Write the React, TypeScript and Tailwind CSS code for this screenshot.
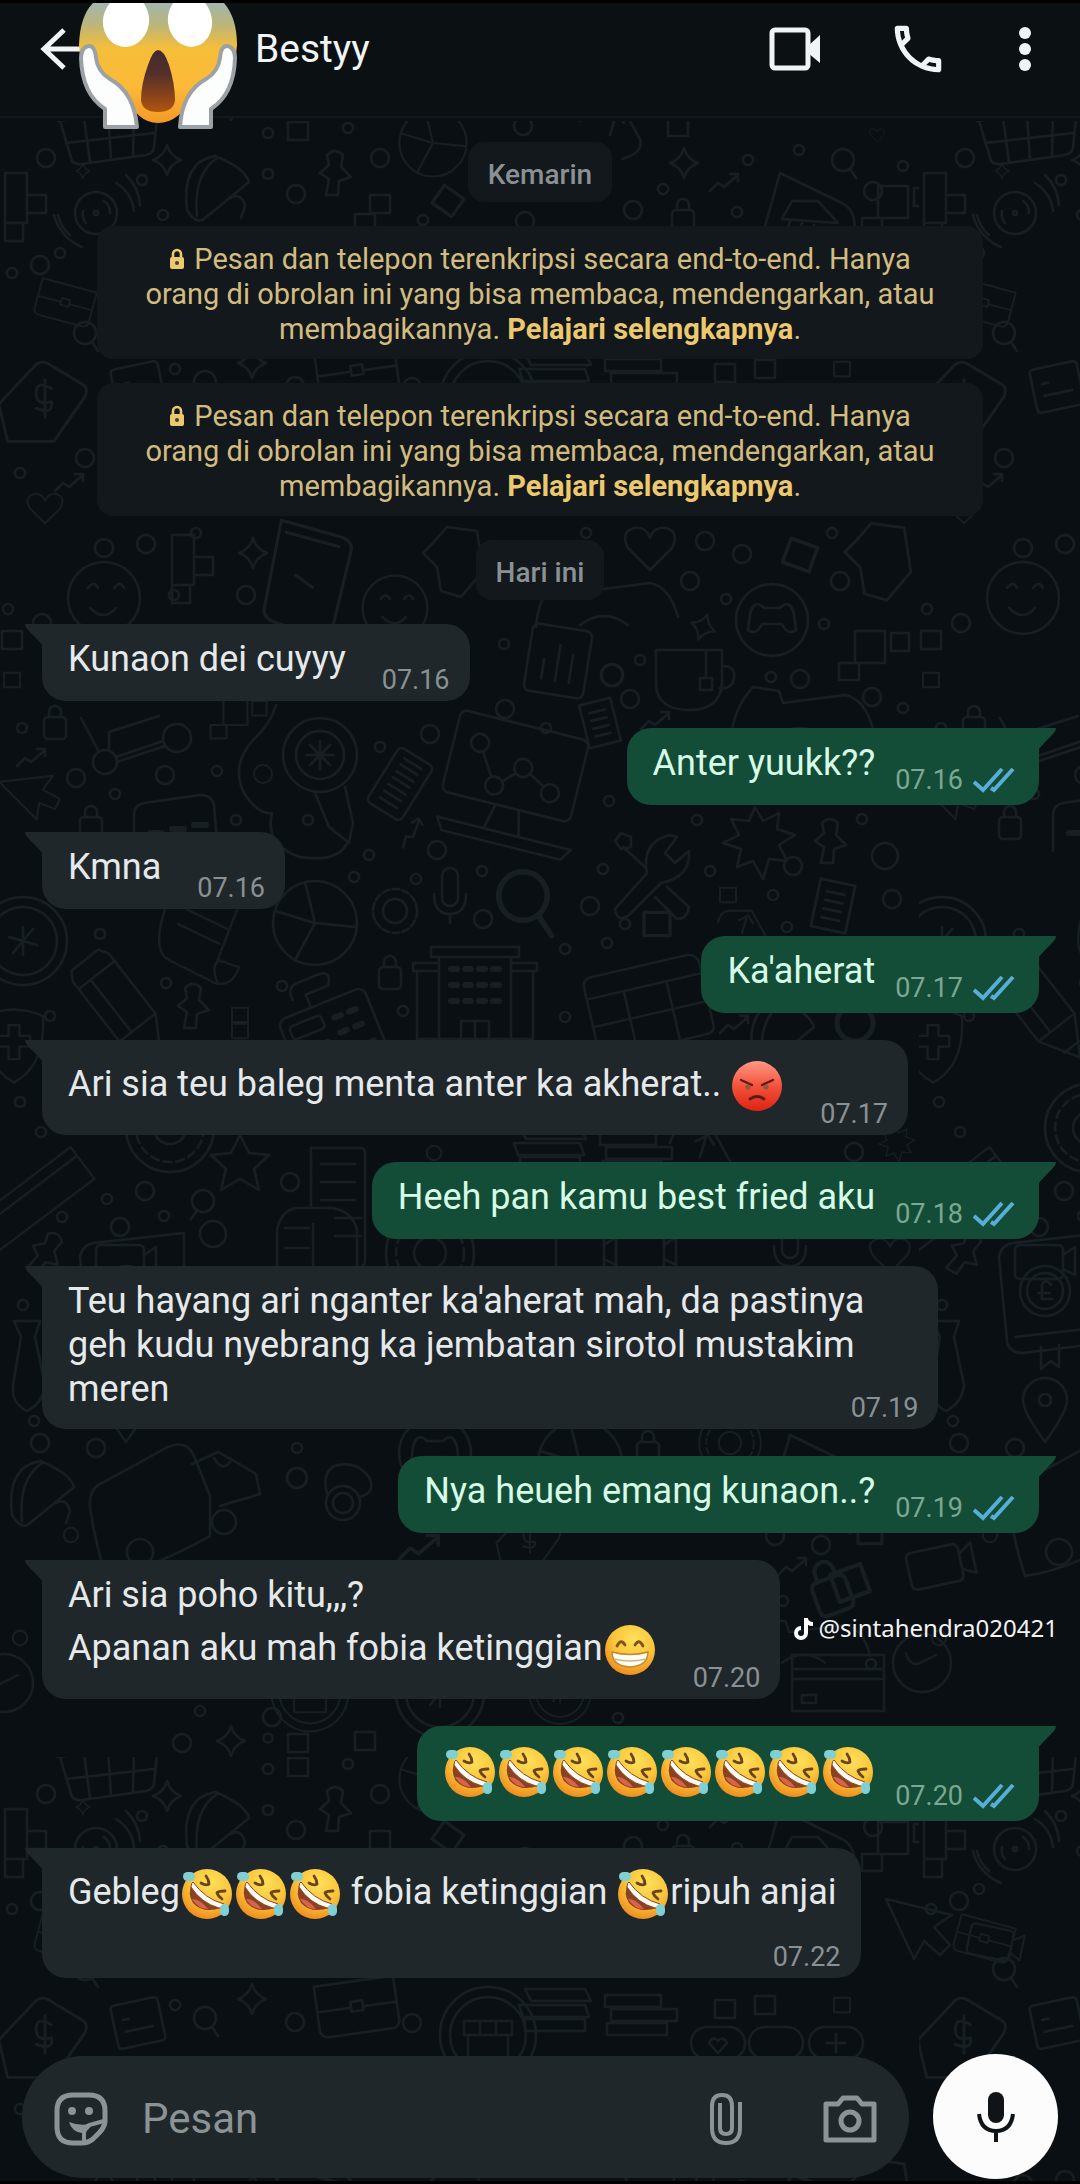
import React from "react";
import { MdOutlineCall } from "react-icons/md";

/* ---------- Wallpaper ---------- */

type Doodle = [kind: string, x: number, y: number, scale?: number, rotate?: number];

const shapes: Record<string, React.ReactNode> = {
  dot: <circle r="5" />,
  ring: <circle r="9" />,
  disc: <circle r="13" />,
  square: <rect x="-10" y="-9" width="20" height="18" />,
  squares: <path d="M-2 -32h30v32h-30zM-18 0h20v17h-20zM34 -30h18v18h-18z" />,
  steps: <path d="M-22 -30h22v50h-22zM0 -8h19v18h-19zM-22 20h18v18h-18z" />,
  spark: <path d="M0 -15Q3 -4 14 0Q3 4 0 15Q-3 4 -14 0Q-3 -4 0 -15z" />,
  zig: <path d="M-15 8l8 -8l6 4l14 -12M5 -9h8v7" />,
  lock: (
    <>
      <rect x="-11" y="-6" width="22" height="22" rx="4" />
      <path d="M-6 -6v-5a6 6 0 0 1 12 0v5" />
    </>
  ),
  pin: <path d="M-8 -20q8 -8 16 0l-2 12l10 10l-12 4l-1 14h-12l3 -16l-9 -6l9 -8z" />,
  pie: (
    <>
      <circle r="42" />
      <path d="M0 0L-10 -41M0 0L41 4M0 0L-20 37M0 0L-40 -12" />
    </>
  ),
  sonar: (
    <>
      <circle r="21" />
      <circle r="2" />
      <path d="M-10 10a14 14 0 0 1 -3 -12M8 -12a14 14 0 0 1 6 12M20 -30a38 38 0 0 1 18 28M30 -38a46 46 0 0 1 14 30M-26 22a36 36 0 0 1 -12 -20M-14 34a46 46 0 0 1 -28 -32" />
    </>
  ),
  taco: <path d="M-28 22Q-34 -26 0 -32Q30 -20 34 -6L-10 30Q-18 38 -28 22zM-18 28Q-22 -14 2 -30M12 12q14 -10 18 6l-4 12" />,
  basket: (
    <>
      <path d="M-52 -18L52 -30q5 8 -2 12L-50 -6q-6 -4 -2 -12zM-48 -6l12 40q4 4 10 3l64 -9q8 -2 8 -8l4 -38" />
      <path d="M-24 -9l6 44M0 -12l3 44M26 -15l-1 44M-42 16l88 -10M-26 -14L-6 -38L28 -22" />
    </>
  ),
  magnifier: (
    <>
      <circle r="11" />
      <path d="M7 9l6 9" />
    </>
  ),
  lens: (
    <>
      <circle r="37" />
      <circle r="24" />
      <path d="M-14 0h28M0 -14v28M-10 -10l20 20M10 -10l-20 20" />
      <path d="M-5 38l14 34l20 16l4 -20l-8 -36M-44 -50Q-50 -30 -66 -16Q-90 10 -76 38Q-62 60 -48 58Q-56 90 -20 102Q20 108 28 86" />
    </>
  ),
  barcode: (
    <>
      <rect x="-20" y="-32" width="40" height="64" rx="5" />
      <path d="M-10 -24h20M-10 -17h20M-10 -9h20M-10 -2h20M-10 6h20M-10 14h20M-10 22h20" />
    </>
  ),
  laptop: (
    <>
      <rect x="-66" y="-44" width="132" height="84" rx="7" />
      <path d="M-64 66L74 66L66 78H-56zM-10 40l-6 26M14 40l6 26" />
      <circle cx="-40" cy="-16" r="9" />
      <circle cx="-16" cy="22" r="9" />
      <circle cx="8" cy="-2" r="9" />
      <circle cx="40" cy="16" r="9" />
      <path d="M-35 -8l14 22M-9 16l11 -11M16 2l16 9" />
    </>
  ),
  gear: (
    <>
      <circle r="12" />
      <circle r="22" strokeDasharray="7 3" />
    </>
  ),
  mic: <path d="M-8 -20a8 8 0 0 1 16 0v22a8 8 0 0 1 -16 0zM-16 -2q0 20 16 20q16 0 16 -20M0 18v9" />,
  coin: (
    <>
      <circle r="44" />
      <circle r="34" />
      <path d="M0 -14v28M-14 -4l28 8M-10 12L10 -12" />
    </>
  ),
  scroll: <path d="M-40 -40q-22 60 0 70l52 26q18 4 26 -18l-24 -8l24 -62M14 56q-8 -20 2 -26M-30 -10l46 22M-20 -26l46 22" />,
  pencil: <path d="M-18 -60h36l6 10v80l-24 40l-24 -40v-80zM-24 -40h48M-24 30h48M-8 -40v70M-10 56h20" />,
  building: (
    <>
      <path d="M-44 -44h88v10h-88zM-36 -34v82h72v-82M-62 -28h26v8h-26zM36 -28h26v8h-26zM-58 -20v68h22M58 -20v68h-22M-14 48v-18h28v18M0 30v18" />
      <path d="M-24 -22h48M-24 -6h48M-24 10h48" strokeDasharray="6 8" strokeWidth="6" />
    </>
  ),
  calc: (
    <>
      <rect x="-46" y="-26" width="92" height="80" rx="8" />
      <rect x="-38" y="-16" width="34" height="14" rx="4" />
      <path d="M8 -8h30M8 8h30M-30 12h30M-30 28h66" strokeDasharray="7 9" strokeWidth="6" />
      <path d="M-10 -26v-14h24q10 -14 -6 -14h-20q-14 0 -12 14" />
    </>
  ),
  chart: (
    <>
      <rect x="-30" y="-34" width="60" height="68" rx="6" />
      <path d="M-14 20v-20M0 20v-36M14 20v-28" />
    </>
  ),
  pocket: <path d="M-34 -28h66v36q-4 24 -32 24q-32 0 -34 -24zM16 -28v26M32 -12q14 0 12 12t-14 10M10 0h12v12h-12z" />,
  pad: (
    <>
      <circle r="36" />
      <path d="M-22 -6q4 -16 14 -6h16q10 -10 14 6l2 16q-8 6 -14 -6h-20q-6 12 -14 6z" />
    </>
  ),
  heart: <path d="M0 22L-22 0q-8 -16 6 -20q12 -2 16 10q4 -12 16 -10q14 4 6 20z" />,
  doc: <path d="M-16 -22h32v44h-32zM-8 -12h16M-8 -4h16M-8 4h16M-8 12h16" />,
  folder: <path d="M-64 24q2 -30 22 -52l26 4l4 12l62 -8q20 4 28 34M-20 22q24 -18 48 0" />,
  wrench: (
    <path d="M-40 38L-8 2Q-14 -28 14 -36L22 -34L10 -18L20 -8L34 -20Q36 6 6 12L-26 44Q-38 52 -40 38zM-10 -4L-32 -24M-34 -38l10 4v10l-10 2l-6 -8zM12 16l22 20q-2 12 -12 12l-22 -22" />
  ),
  burst: <path d="M0 -34l8 14l16 -8l-2 16l18 6l-16 10l8 16l-18 -2l-6 20l-10 -18l-16 6l4 -18l-18 -6l16 -8l-8 -16l18 2z" />,
  cloud: <path d="M-34 4q-2 -26 22 -24q24 -14 38 4q8 14 8 38q-6 16 -24 8q-40 -4 -44 -26zM14 -6a11 11 0 1 0 2 16" />,
  calendar: <path d="M-52 -40h104q10 2 10 12v66q0 8 -10 8h-104q-10 0 -10 -10v-66q0 -10 10 -10zM-62 -18h124M-62 12h124M-22 -18v64M24 -18v64" />,
  shield: <path d="M-32 -30Q0 -44 32 -30Q36 24 0 44Q-36 24 -32 -30zM-6 -20h12v12h12v12h-12v14h-12v-14h-12v-12h12z" />,
  ruler: <path d="M-80 -18h150v44h-150zM-80 -6h150" />,
  wheel: (
    <>
      <circle r="44" />
      <circle r="34" strokeDasharray="8 5" />
      <circle r="16" />
    </>
  ),
  star: <path d="M0 -28l9 18l20 2l-15 14l5 21l-19 -11l-19 11l5 -21l-15 -14l20 -2z" />,
  sheet: <path d="M-26 -60h50q4 0 4 6v106q0 8 -8 8M-26 -60v60M-16 -44h34M-16 -26h34M-16 -8h34M-2 10h26M-2 28h26M-60 60v-38q4 -20 20 -22h36q20 4 24 22v38M-24 60v-44M-52 20h24M-52 40h24" />,
  tie: <path d="M-13 -42h26l-5 16l10 48q-2 18 -18 26q-16 -8 -14 -26l8 -48z" />,
  book: (
    <>
      <path d="M-46 -46q2 -12 14 -14l90 -10v110l-80 10q-14 0 -16 -12zM-30 34l88 -10M-4 44v22l10 -8l8 6v-22" />
      <circle cx="0" cy="-12" r="25" />
      <circle cx="0" cy="-12" r="18" />
      <path d="M6 -18q-6 -8 -9 0v14h10M-7 -10h12" />
    </>
  ),
  marker: (
    <>
      <path d="M0 34Q-22 4 -22 -8A22 22 0 0 1 22 -8Q22 4 0 34z" />
      <circle cy="-8" r="6" />
    </>
  ),
  skate: (
    <>
      <path d="M-60 20q-2 -20 14 -26l62 -34q20 -10 28 8l16 40v40q-60 34 -104 40q-10 -30 -16 -68zM42 -24l26 -12l18 10l20 12l4 20l-40 12M64 -30q8 14 16 4" />
      <circle cx="74" cy="34" r="12" />
      <circle cx="-10" cy="64" r="13" />
    </>
  ),
  bino: (
    <>
      <circle r="17" />
      <circle r="10" />
      <path d="M-16 -10q-6 -22 10 -28q20 -4 32 12q8 16 -10 20" />
    </>
  ),
  camera: (
    <>
      <rect x="-24" y="-18" width="48" height="34" rx="5" />
      <path d="M24 -8l12 -8v28l-12 -6" />
    </>
  ),
  card: <path d="M-46 -28h92v56h-92zM-46 -14h92M-46 -4h92M-36 12h14v8h-14z" />,
  clock: (
    <>
      <circle r="29" />
      <path d="M-16 -10q4 14 14 10l16 -8" />
    </>
  ),
  tag: (
    <>
      <path d="M-34 34L-42 0L-8 -36q6 -4 12 0l30 18q6 4 2 12L8 34z" />
      <path d="M6 -14q-14 -8 -14 4t14 8q2 12 -14 6M0 -22v34" />
    </>
  ),
  note: <path d="M-24 -18q0 -4 4 -4h40q4 0 4 4v36q0 4 -4 4h-40q-4 0 -4 -4zM-14 -6h6M-14 6h28" />,
  brief: <path d="M-40 -26h80v46q-2 6 -8 6h-64q-6 0 -8 -6zM-40 0h34M6 0h34M-6 -6h12v10h-12z" />,
  shop: (
    <>
      <circle r="48" />
      <circle r="38" />
      <path d="M-24 -14h48v14h-48zM-20 2v22h40v-22M-8 -14v14M8 -14v14" />
    </>
  ),
  papers: <path d="M-60 -26h60l6 12h-60zM-66 -10h66l4 12h-66zM-60 4h60v12h-60zM20 -20h56v12h-56zM26 -6h66v12h-66zM22 8h60v12h-60z" />,
  pills: (
    <>
      <rect x="-84" y="-16" width="54" height="32" rx="16" />
      <rect x="-26" y="-16" width="54" height="32" rx="16" />
      <rect x="34" y="-16" width="54" height="32" rx="16" />
      <path d="M52 0h18M61 -9v18M-57 10l-9 -10q4 -8 9 -2q5 -6 9 2z" />
    </>
  ),
  cursor: <path d="M-34 -34L32 -18L14 -6L30 12L20 22L4 8L-6 26z" />,
  bank: (
    <>
      <path d="M-46 54L-20 -38L42 -8q18 10 10 36L40 60" />
      <path d="M-18 8l10 -18l26 0l20 22zM-10 10l-6 18M2 12l-6 20M14 14l-4 20M28 16l-4 18M-22 26l50 14" />
    </>
  ),
  bag: <path d="M-30 -20q4 -14 14 -14h28l18 32q4 14 -18 20M0 -6l6 -20M-4 -22l12 -6l6 10" />,
  phone: <path d="M-28 -44L22 -30q10 4 8 12l-16 66q-4 8 -12 6l-38 -14q-8 -4 -6 -12zM-24 -34l44 12M-16 2l14 10" />,
  mitten: <path d="M-22 -20l14 -16l30 4l6 40l-22 26l-20 -6l-4 -24l-14 -14z" />,
  face: (
    <>
      <circle r="36" />
      <path d="M-16 -10q6 -8 10 0M10 -10q6 -8 10 0M-14 10q14 14 26 0" />
    </>
  ),
  pass: (
    <>
      <path d="M-42 26v-36q0 -10 10 -12l56 -8q12 0 14 10l4 46" />
      <path d="M-26 8h12M-4 4h12M18 0h12" strokeWidth="6" />
    </>
  ),
  bones: (
    <>
      <circle cx="-36" cy="14" r="12" />
      <circle cx="36" cy="-10" r="14" />
      <path d="M-25 9L22 -7M-24 14L24 -2M-42 4L-60 -30M-32 2v-18l50 -16" />
    </>
  ),
};

const doodles: Doodle[] = [
  ["basket", 108, 124], ["ring", 46, 155], ["spark", 83, 168, 0.5], ["spark", 167, 157], ["dot", 142, 177],
  ["sonar", 96, 210], ["steps", 27, 200], ["taco", 215, 185], ["dot", 163, 212], ["dot", 268, 130],
  ["square", 298, 128], ["dot", 268, 171], ["ring", 296, 191], ["pin", 335, 172], ["ring", 380, 155],
  ["dot", 348, 125], ["pie", 433, 140, 0.8], ["square", 448, 198, 1.2, 35], ["square", 380, 201], ["square", 365, 220],
  ["ring", 523, 123], ["ring", 525, 218], ["dot", 423, 217], ["bag", 610, 138], ["square", 678, 124],
  ["spark", 684, 160], ["dot", 663, 186], ["ring", 633, 207], ["lock", 683, 213], ["zig", 725, 180],
  ["dot", 748, 157], ["dot", 799, 147], ["dot", 737, 209], ["bank", 800, 208], ["magnifier", 843, 157],
  ["ring", 873, 188], ["dot", 903, 163], ["heart", 877, 132, 0.3], ["squares", 880, 215],
  ["dot", 60, 250], ["ring", 40, 262], ["brief", 65, 300, 0.7, 15], ["dot", 12, 270], ["magnifier", 85, 330],
  ["tag", 45, 401, 1.1], ["note", 138, 384, 1, -12], ["magnifier", 205, 379], ["dot", 175, 366], ["ring", 295, 383],
  ["spark", 252, 360], ["brief", 357, 368, 1, -8], ["ring", 412, 384], ["shop", 488, 396], ["papers", 585, 376],
  ["pills", 775, 404], ["square", 842, 366, 0.8], ["square", 765, 366], ["square", 725, 370],
  ["heart", 45, 505, 0.7], ["dot", 20, 470], ["ring", 85, 455], ["zig", 70, 480],
  ["ring", 104, 545], ["ring", 146, 541], ["dot", 196, 530], ["steps", 194, 562], ["spark", 253, 550],
  ["face", 104, 595], ["dot", 174, 592], ["phone", 315, 570, 1.2], ["ring", 246, 592], ["face", 395, 605, 0.9],
  ["mitten", 455, 560], ["folder", 600, 600], ["dot", 586, 530], ["heart", 650, 545], ["ring", 705, 538],
  ["ring", 742, 551], ["square", 800, 552, 1.4, 20], ["mitten", 880, 560, 1.1], ["ring", 840, 578],
  ["dot", 832, 530], ["ring", 690, 578], ["dot", 726, 596], ["square", 12, 637],
  ["ring", 42, 620], ["dot", 8, 606], ["square", 12, 677, 0.8], ["lock", 55, 720], ["dot", 22, 725],
  ["bones", 141, 745], ["zig", 32, 755], ["ring", 76, 775], ["ring", 165, 772], ["dot", 217, 768],
  ["dot", 115, 791], ["cursor", 34, 795, 0.8, -20], ["lock", 91, 820], ["pass", 176, 822], ["squares", 225, 722, 0.8],
  ["dot", 236, 817], ["disc", 263, 771, 0.7], ["lens", 320, 752], ["dot", 308, 817], ["barcode", 400, 781, 1, 32],
  ["dot", 380, 744], ["ring", 430, 731], ["dot", 504, 641], ["ring", 505, 706], ["zig", 412, 830, 1, -30],
  ["laptop", 515, 765, 1, 14], ["ring", 437, 847], ["dot", 369, 852], ["dot", 354, 874], ["dot", 416, 876],
  ["pie", 315, 920], ["gear", 395, 908], ["mic", 450, 893], ["magnifier", 523, 893, 2.2], ["ring", 483, 916],
  ["dot", 482, 868], ["coin", 23, 938], ["dot", 100, 931], ["scroll", 205, 930, 0.9], ["pencil", 120, 1002, 0.95, -38],
  ["dot", 166, 980], ["pin", 193, 1005], ["dot", 282, 983], ["lock", 390, 970], ["dot", 403, 1008],
  ["square", 240, 1012, 0.8], ["square", 240, 1028, 0.8], ["calc", 330, 1025, 1, -22], ["building", 475, 988], ["shield", 14, 1040, 0.9],
  ["dot", 50, 1013], ["chart", 558, 658, 1, 9], ["ring", 612, 672, 1.2], ["ring", 630, 696], ["dot", 640, 657],
  ["pocket", 690, 675], ["spark", 703, 624, 0.9, 20], ["pad", 772, 617], ["dot", 824, 621], ["squares", 857, 660],
  ["ring", 800, 676], ["dot", 771, 674], ["ring", 872, 694], ["dot", 903, 705], ["doc", 600, 720, 1, -14],
  ["zig", 656, 718], ["folder", 795, 712], ["dot", 546, 725], ["dot", 609, 798],
  ["dot", 697, 817], ["wrench", 655, 868], ["burst", 755, 838], ["pin", 830, 840], ["dot", 862, 816],
  ["disc", 885, 853], ["ring", 793, 863], ["dot", 710, 868], ["dot", 603, 866],
  ["ring", 590, 903], ["dot", 773, 892], ["square", 728, 892, 0.8], ["doc", 833, 903, 1.1, 12], ["ring", 892, 896],
  ["square", 657, 921, 1.3], ["dot", 625, 921], ["dot", 607, 940], ["bag", 742, 935, 0.8], ["dot", 787, 924],
  ["calendar", 648, 1000, 0.95, -13], ["dot", 565, 946], ["dot", 565, 1014], ["zig", 735, 1022], ["taco", 780, 1030],
  ["ring", 855, 1020, 2], ["ruler", 30, 1195, 0.9, -37], ["dot", 20, 1099], ["dot", 41, 1129], ["wheel", 170, 1125],
  ["star", 240, 1160], ["ring", 145, 1188], ["ring", 290, 1179], ["dot", 107, 1196], ["magnifier", 203, 1198, 1, 70],
  ["sheet", 337, 1205], ["disc", 213, 1231], ["ring", 120, 1224], ["dot", 62, 1214], ["dot", 164, 1213],
  ["pin", 45, 1252, 1, 30], ["camera", 120, 1260], ["ring", 434, 1150, 0.8], ["wheel", 430, 1250],
  ["papers", 580, 1150], ["bag", 700, 1160], ["ring", 854, 1149], ["burst", 895, 1140, 0.5],
  ["camera", 580, 1250], ["camera", 640, 1250], ["mic", 790, 1245], ["heart", 890, 1252, 0.8], ["tie", 27, 1360],
  ["dot", 23, 1302], ["dot", 34, 1418], ["ring", 40, 1440], ["taco", 40, 1490], ["skate", 150, 1485],
  ["ring", 96, 1445], ["ring", 297, 1475, 1.1], ["dot", 297, 1445], ["bino", 343, 1500], ["pad", 435, 1450],
  ["pie", 580, 1460], ["lock", 648, 1445], ["wheel", 730, 1440, 0.7], ["bank", 810, 1470], ["ring", 71, 1532, 0.8],
  ["zig", 420, 1545, 1.4], ["tag", 530, 1540, 0.8], ["ring", 775, 1533], ["ring", 821, 1542], ["square", 870, 1530, 1.2],
  ["zig", 793, 1564], ["lock", 830, 1585, 1.6, -20], ["square", 850, 1580, 1.6, -20], ["dot", 783, 1598], ["card", 838, 1680],
  ["folder", 800, 1640, 0.9], ["dot", 871, 1661], ["ring", 20, 1635, 0.8], ["shop", 310, 1690, 0.8],
  ["coin", 440, 1690], ["dot", 200, 1708], ["ring", 272, 1714],
  ["spark", 231, 1738], ["dot", 268, 1735, 0.9], ["ring", 182, 1740], ["square", 298, 1740], ["square", 365, 1738],
  ["coin", 560, 1690, 0.7], ["dot", 618, 1715], ["marker", 126, 1405], ["book", 126, 1300],
];

/* Drawn once, past the first tile's right edge. */
const loose: Doodle[] = [
  ["clock", 922, 1660], ["clock", 4, 1680], ["camera", 935, 1565, 1.1, -12], ["cursor", 920, 1930], ["camera", 990, 1940, 0.9, 12],
];

function draw([kind, x, y, s = 1, r = 0]: Doodle, i: number) {
  return (
    <g key={i} transform={`translate(${x} ${y}) rotate(${r}) scale(${s})`}>
      {shapes[kind]}
    </g>
  );
}

const ink = { fill: "none", stroke: "#171f22", strokeWidth: 2.5, strokeLinejoin: "round", strokeLinecap: "round" } as const;

function Wallpaper() {
  return (
    <svg className="absolute inset-0 h-full w-full" aria-hidden="true">
      <defs>
        <pattern id="doodles" x="0" y="118" width="919" height="1636" patternUnits="userSpaceOnUse">
          <g transform="translate(0 -118)" {...ink}>
            {doodles.map(draw)}
          </g>
        </pattern>
      </defs>
      <rect width="100%" height="100%" fill="url(#doodles)" />
      <g {...ink}>{loose.map(draw)}</g>
    </svg>
  );
}

/* ---------- Emoji ---------- */

function EmojiDefs() {
  return (
    <svg className="absolute h-0 w-0" aria-hidden="true">
      <defs>
        <radialGradient id="face" cx="0.58" cy="0.28" r="0.75">
          <stop offset="0" stopColor="#fde05a" />
          <stop offset="0.55" stopColor="#fbc53a" />
          <stop offset="1" stopColor="#ee8a1e" />
        </radialGradient>
        <linearGradient id="anger" x1="0" y1="0" x2="0" y2="1">
          <stop offset="0" stopColor="#ff9a84" />
          <stop offset="0.5" stopColor="#f4523c" />
          <stop offset="1" stopColor="#dd2312" />
        </linearGradient>
        <linearGradient id="fright" x1="0" y1="0" x2="0" y2="1">
          <stop offset="0" stopColor="#a3b6b0" />
          <stop offset="0.17" stopColor="#b9b57c" />
          <stop offset="0.38" stopColor="#f5be3a" />
          <stop offset="0.7" stopColor="#fdb937" />
          <stop offset="1" stopColor="#f39a26" />
        </linearGradient>
        <linearGradient id="gasp" x1="0" y1="0" x2="0" y2="1">
          <stop offset="0" stopColor="#402b30" />
          <stop offset="0.4" stopColor="#57302a" />
          <stop offset="1" stopColor="#b1540e" />
        </linearGradient>
      </defs>
    </svg>
  );
}

const emojiClass = "mx-px inline-block h-[52px] w-[52px] align-middle";

function Rofl() {
  return (
    <svg viewBox="0 0 52 52" className={emojiClass} role="img" aria-label="🤣">
      <circle cx="26" cy="26" r="25" fill="url(#face)" />
      <path d="M11 15Q6 26 12 35Q22 46 40 40Q22 34 11 15z" fill="#8a4322" />
      <path d="M11 31Q18 30 27 41Q17 41 11 31z" fill="#d9634a" />
      <path d="M12 14Q24 31 43 36Q43 40 38 40Q20 35 10 19Q10 15 12 14z" fill="#fffaf2" stroke="#8a4322" strokeWidth="1" />
      <g fill="none" stroke="#6b431c" strokeWidth="2.8" strokeLinecap="round" strokeLinejoin="round">
        <path d="M20 15Q25 18 28 16Q28 12 25 8" />
        <path d="M44 23Q37 23 36 25Q37 28 41 31" />
      </g>
      <rect x="2" y="4" width="12" height="9" rx="4.5" fill="#7fcfd4" />
      <rect x="39" y="36" width="9" height="12" rx="4.5" fill="#7fcfd4" />
    </svg>
  );
}

function Grin() {
  return (
    <svg viewBox="0 0 52 52" className={emojiClass} role="img" aria-label="😁">
      <circle cx="26" cy="26" r="25" fill="url(#face)" />
      <g fill="none" stroke="#80551c" strokeWidth="2.8" strokeLinecap="round">
        <path d="M13 22Q17 14 21 21" />
        <path d="M31 21Q35 14 39 22" />
      </g>
      <path d="M8 28Q26 33 44 28Q44 42 26 43Q8 42 8 28z" fill="#fffdf5" stroke="#c08a2c" strokeWidth="1.5" />
      <path d="M10 35Q26 39 42 35" fill="none" stroke="#c9b68f" strokeWidth="1.4" />
    </svg>
  );
}

function Angry() {
  return (
    <svg viewBox="0 0 52 52" className={emojiClass} role="img" aria-label="😡">
      <circle cx="26" cy="26" r="25" fill="url(#anger)" />
      <g fill="none" stroke="#5b1a14" strokeWidth="2.2" strokeLinecap="round">
        <path d="M10 20L21 25" />
        <path d="M42 20L31 25" />
        <path d="M19 39Q26 34 33 39" strokeWidth="2.8" />
      </g>
      <circle cx="17" cy="27" r="2.6" fill="#8b5a3c" />
      <circle cx="35" cy="27" r="2.6" fill="#8b5a3c" />
    </svg>
  );
}

function Scream() {
  return (
    <svg viewBox="77 3 162 128" className="h-[128px] w-[162px]" role="img" aria-label="😱">
      <path d="M79 45Q80 16 93 3H224Q237 18 237 45Q236 78 196 92Q180 123 158 123Q137 123 122 92Q80 78 79 45z" fill="url(#fright)" />
      <ellipse cx="126" cy="21" rx="23" ry="26" fill="#fff" transform="rotate(10 126 21)" />
      <ellipse cx="190" cy="21" rx="22" ry="26" fill="#fff" transform="rotate(-10 190 21)" />
      <path d="M158 50Q164 50 169 65Q175 84 175 100Q174 112 158 112Q142 112 141 100Q141 84 148 65Q153 50 158 50z" fill="url(#gasp)" />
      <g fill="#fcfdfd" stroke="#9ba1a5" strokeWidth="4" strokeLinejoin="round">
        <path d="M88 46Q95 45 96 58Q98 72 110 79Q134 92 137 127H105V109Q82 94 81 58Q81 48 88 46z" />
        <path d="M228 46Q221 45 220 58Q218 72 206 79Q182 92 180 127H211V109Q234 94 235 58Q235 48 228 46z" />
      </g>
    </svg>
  );
}

/* ---------- Messages ---------- */

function Ticks() {
  return (
    <svg viewBox="0 0 42 26" className="h-[26px] w-[42px]" fill="none" stroke="#56aed9" strokeWidth="4" role="img" aria-label="Dibaca">
      <path d="M1 15L10 23L29 2" />
      <path d="M18 21L21 23L40 2" />
    </svg>
  );
}

function Line({ children, emoji = false }: { children: React.ReactNode; emoji?: boolean }) {
  return <span className={emoji ? "block leading-[62px]" : "block leading-[44px]"}>{children}</span>;
}

function Incoming({ time, below, children, aside }: { time: string; below?: "overlap" | "row"; children: React.ReactNode; aside?: React.ReactNode }) {
  const layout = below ? "flex-col" : "gap-9";
  const text = below === "overlap" ? "pr-[54px]" : below === "row" ? "pr-1" : "pb-[13px]";
  const stamp = below === "overlap" ? "-mt-[17px]" : below === "row" ? "mt-5" : "";
  return (
    <li className="flex items-center">
      <div className={`relative flex items-end rounded-3xl rounded-tl-none bg-[#1f272a] pt-[13px] pr-5 pb-[7px] pl-[26px] ${layout}`}>
        <svg viewBox="0 0 18 22" className="absolute top-0 -left-[17px] h-[22px] w-[18px]" fill="#1f272a" aria-hidden="true">
          <path d="M0 0H18V22Q14 17 3 6Q0 3 0 0z" />
        </svg>
        <p className={`self-start whitespace-nowrap text-[#e6e9eb] ${text}`}>{children}</p>
        <time className={`text-[27px] leading-7 text-[#8a9194] ${stamp}`}>{time}</time>
      </div>
      {aside}
    </li>
  );
}

function Outgoing({ time, children }: { time: string; children: React.ReactNode }) {
  return (
    <li className="flex justify-end">
      <div className="relative flex items-end gap-5 rounded-3xl rounded-tr-none bg-[#144d37] pt-[13px] pr-6 pb-[11px] pl-[26px]">
        <svg viewBox="0 0 18 22" className="absolute top-0 -right-[17px] h-[22px] w-[18px]" fill="#144d37" aria-hidden="true">
          <path d="M18 0H0V22Q4 17 15 6Q18 3 18 0z" />
        </svg>
        <p className="whitespace-nowrap pb-[9px] text-[#d6fbe6]">{children}</p>
        <div className="flex items-center gap-[10px]">
          <time className="text-[27px] leading-7 text-[#7aa892]">{time}</time>
          <Ticks />
        </div>
      </div>
    </li>
  );
}

function Chip({ children }: { children: React.ReactNode }) {
  return <div className="rounded-2xl bg-[#12181b] px-5 pt-[15px] pb-[9px] text-[28px] leading-9 font-medium text-[#899195]">{children}</div>;
}

function Notice() {
  return (
    <div className="w-full max-w-[886px] rounded-2xl bg-[#12181b] px-8 pt-4 pb-3 text-center text-[29px] leading-[35px] text-[#d3bc80]">
      <svg viewBox="0 0 16 22" className="mr-[9px] mb-1 inline-block h-[22px] w-4" aria-hidden="true">
        <path d="M4 10V6a4 4 0 0 1 8 0v4" fill="none" stroke="#ecc96f" strokeWidth="2.6" />
        <rect x="1" y="9" width="14" height="12" rx="2" fill="#ecc96f" />
        <circle cx="8" cy="15" r="2" fill="#4a3f22" />
      </svg>
      Pesan dan telepon terenkripsi secara end-to-end. Hanya
      <br />
      orang di obrolan ini yang bisa membaca, mendengarkan, atau
      <br />
      membagikannya. <a href="#info" className="font-bold text-[#ecc96f]">Pelajari selengkapnya</a>.
    </div>
  );
}

function Watermark() {
  return (
    <span className="ml-[14px] flex items-center gap-1 pb-1 font-['Noto_Sans',sans-serif] text-2xl text-[#f2f3f4]">
      <svg viewBox="0 0 20 24" className="h-6 w-5" fill="none" aria-hidden="true">
        <path d="M12 2V17A5 5 0 1 1 7 12M12 3Q13 8 19 8" stroke="#fff" strokeWidth="4" />
      </svg>
      @sintahendra020421
    </span>
  );
}

/* ---------- Page ---------- */

export default function App() {
  return (
    <div className="relative flex min-h-screen flex-col overflow-hidden border-y-[3px] border-black bg-[#0a0f13] font-[Roboto,sans-serif]">
      <Wallpaper />
      <EmojiDefs />

      <header className="relative z-10 flex h-[115px] items-start border-b-2 border-[#12191c] bg-[#0b1013] text-[#f1f4f5]">
        <button aria-label="Kembali" className="ml-10 flex h-[92px] w-[37px] items-center">
          <svg viewBox="0 0 42 42" className="h-[42px] w-[42px] shrink-0" fill="none" stroke="currentColor" strokeWidth="5">
            <path d="M24 2L4 21L24 40M4 21H42" />
          </svg>
        </button>
        <span className="w-[162px] shrink-0">
          <Scream />
        </span>
        <h1 className="ml-4 flex h-[92px] flex-1 items-center text-[39px]">Bestyy</h1>
        <div className="flex h-[92px] items-center pr-[45px]">
          <button aria-label="Panggilan video" className="mr-[66px]">
            <svg viewBox="0 0 52 44" className="h-11 w-[52px]" fill="none">
              <rect x="3" y="3" width="36" height="38" rx="3" stroke="currentColor" strokeWidth="5" />
              <path d="M39 19L51 8V36L39 26z" fill="currentColor" />
            </svg>
          </button>
          <button aria-label="Panggilan suara" className="mr-[66px]">
            <MdOutlineCall className="h-[62px] w-[62px]" />
          </button>
          <button aria-label="Menu lainnya">
            <svg viewBox="0 0 20 44" className="h-11 w-5" fill="currentColor">
              <circle cx="10" cy="6" r="6" />
              <circle cx="10" cy="22" r="6" />
              <circle cx="10" cy="38" r="6" />
            </svg>
          </button>
        </div>
      </header>

      <main className="relative flex flex-1 flex-col items-center gap-6 pt-6">
        <Chip>Kemarin</Chip>
        <Notice />
        <Notice />
        <Chip>Hari ini</Chip>

        <ul className="flex w-full flex-col gap-[27px] pr-[41px] pl-[42px] text-[36px]">
          <Incoming time="07.16"><Line>Kunaon dei cuyyy</Line></Incoming>
          <Outgoing time="07.16"><Line>Anter yuukk??</Line></Outgoing>
          <Incoming time="07.16"><Line>Kmna</Line></Incoming>
          <Outgoing time="07.17"><Line>Ka'aherat</Line></Outgoing>
          <Incoming time="07.17"><Line emoji>Ari sia teu baleg menta anter ka akherat.. <Angry /></Line></Incoming>
          <Outgoing time="07.18"><Line>Heeh pan kamu best fried aku</Line></Outgoing>
          <Incoming time="07.19" below="overlap">
            <Line>Teu hayang ari nganter ka'aherat mah, da pastinya</Line>
            <Line>geh kudu nyebrang ka jembatan sirotol mustakim</Line>
            <Line>meren</Line>
          </Incoming>
          <Outgoing time="07.19"><Line>Nya heueh emang kunaon..?</Line></Outgoing>
          <Incoming time="07.20" aside={<Watermark />}>
            <Line>Ari sia poho kitu,,,?</Line>
            <Line emoji>Apanan aku mah fobia ketinggian<Grin /></Line>
          </Incoming>
          <Outgoing time="07.20">
            <Line emoji><Rofl /><Rofl /><Rofl /><Rofl /><Rofl /><Rofl /><Rofl /><Rofl /></Line>
          </Outgoing>
          <Incoming time="07.22" below="row">
            <Line emoji>Gebleg<Rofl /><Rofl /><Rofl /> fobia ketinggian <Rofl />ripuh anjai</Line>
          </Incoming>
        </ul>
      </main>

      <footer className="relative flex items-center gap-6 pr-[22px] pb-[2px] pl-[22px]">
        <div className="flex h-[122px] flex-1 items-center rounded-full bg-[#1f272a] pt-1 pr-8 pl-8 text-[#8b9396]">
          <button aria-label="Stiker">
            <svg viewBox="0 0 54 54" className="h-[54px] w-[54px]" fill="none" stroke="currentColor" strokeWidth="5">
              <path d="M19 3H35Q51 3 51 19V30Q50 36 45 41L39 47Q34 51 28 51H19Q3 51 3 35V19Q3 3 19 3z" />
              <path d="M30 50V42Q30 33 39 32L50 29" strokeWidth="4" />
              <path d="M15 30Q27 35 40 31L31 41H28Q18 40 15 30z" fill="currentColor" stroke="none" />
              <circle cx="18" cy="19" r="4" fill="currentColor" stroke="none" />
              <circle cx="35" cy="19" r="4" fill="currentColor" stroke="none" />
            </svg>
          </button>
          <input type="text" aria-label="Pesan" placeholder="Pesan" className="ml-[34px] min-w-0 flex-1 bg-transparent text-[42px] outline-none placeholder:text-[#8b9396]" />
          <button aria-label="Lampirkan" className="mr-20">
            <svg viewBox="0 0 34 54" className="h-[54px] w-[34px]" fill="none" stroke="currentColor" strokeWidth="4">
              <path d="M31 10V36Q31 51 17 51Q3 51 3 36V14Q3 3 13 3Q23 3 23 14V36Q23 42 17 42Q11 42 11 36V11" />
            </svg>
          </button>
          <button aria-label="Kamera">
            <svg viewBox="0 0 54 48" className="h-12 w-[54px]" fill="none" stroke="currentColor" strokeWidth="5">
              <path d="M3 9H15L20 3H34L39 9H51V45H3z" strokeLinejoin="round" />
              <circle cx="27" cy="26" r="9" />
            </svg>
          </button>
        </div>
        <button aria-label="Rekam pesan suara" className="flex h-[125px] w-[125px] items-center justify-center rounded-full bg-[#fcfcfc] text-[#101416]">
          <svg viewBox="0 0 38 50" className="h-[50px] w-[38px]" fill="none" stroke="currentColor" strokeWidth="4">
            <rect x="11" y="0" width="16" height="31" rx="8" fill="currentColor" stroke="none" />
            <path d="M2 22Q4 39 19 39Q34 39 36 22M19 39V50" />
          </svg>
        </button>
      </footer>
    </div>
  );
}
